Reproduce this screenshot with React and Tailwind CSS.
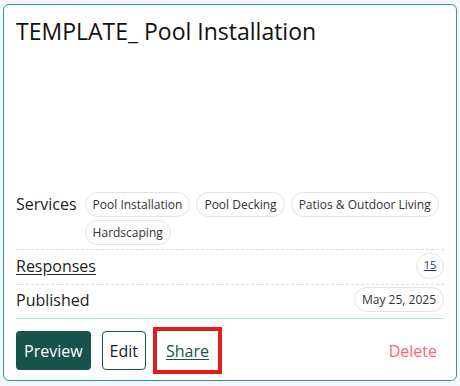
import React from "react";

const services = ["Pool Installation", "Pool Decking", "Patios & Outdoor Living", "Hardscaping"];

export default function App() {
  return (
    <div className="h-[386px] w-[460px] bg-[#f5f6fb] pt-[4px] pl-[3px] font-['Open_Sans',sans-serif]">
      {/* Card */}
      <div className="flex h-[377px] w-[454px] flex-col rounded-md border border-[#2a9d8f] bg-white px-3">
        <h2 className="pt-[11px] text-[23px] leading-[30px] text-[#111]">TEMPLATE_ Pool Installation</h2>

        <div className="flex-1" />

        {/* Services */}
        <div className="flex gap-[8px] border-b border-dashed border-[#dcdcdc] pb-[4px]">
          <span className="pt-[1px] text-[16px] leading-[22px] text-[#222]">Services</span>
          <div className="flex flex-1 flex-wrap gap-x-[6px] gap-y-[3px]">
            {services.map((s) => (
              <span
                key={s}
                className="rounded-full border border-[#e3e3e3] px-[7px] py-[3px] text-[12px] leading-[17px] text-[#333]"
              >
                {s}
              </span>
            ))}
          </div>
        </div>

        {/* Responses */}
        <div className="flex h-[35px] items-center justify-between border-b border-dashed border-[#dcdcdc] pb-[3px]">
          <a href="#" className="text-[16px] text-[#222] underline underline-offset-2">Responses</a>
          <span className="flex h-[26px] w-[28px] items-center justify-center rounded-full border border-[#e3e3e3] text-[11px] text-[#1e3a5f] underline">
            15
          </span>
        </div>

        {/* Published */}
        <div className="flex h-[34px] items-center justify-between border-b border-[#b6e0d9] pb-[4px]">
          <span className="text-[16px] text-[#222]">Published</span>
          <span className="rounded-full border border-[#e3e3e3] px-[7px] py-[3px] text-[12px] leading-[17px] text-[#333]">
            May 25, 2025
          </span>
        </div>

        {/* Actions */}
        <div className="flex items-center gap-[11px] pt-[12px] pb-[10px]">
          <button className="h-[39px] rounded-[4px] bg-[#17524b] px-[8px] text-[16px] text-white">Preview</button>
          <button className="h-[39px] rounded-[4px] border border-[#17524b] px-[7px] text-[16px] text-[#222]">Edit</button>
          <button className="h-[39px] px-[9px] text-[16px] text-[#17524b] underline underline-offset-2 outline-4 outline-solid outline-[#e21b1b]">
            Share
          </button>
          <button className="ml-auto mr-[7px] text-[16px] text-[#ff6470]">Delete</button>
        </div>
      </div>
    </div>
  );
}
